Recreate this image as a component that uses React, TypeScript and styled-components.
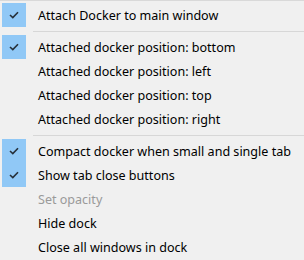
import styled, { createGlobalStyle } from "styled-components";

const Global = createGlobalStyle`
  html, body {
    margin: 0;
    padding: 0;
    background: #f0f0f0;
  }
`;

const Menu = styled.div`
  width: 304px;
  height: 260px;
  box-sizing: border-box;
  background: #f0f0f0;
  border-top: 1px solid #d9d9d9;
  padding-top: 2px;
  font-family: "Noto Sans", "Open Sans", sans-serif;
  font-size: 12.55px;
  color: #000;
  overflow: hidden;
`;

const Row = styled.div<{ $disabled?: boolean }>`
  display: flex;
  align-items: center;
  height: 24px;
  color: ${(p) => (p.$disabled ? "#9a9a9a" : "#000")};
`;

const CheckCell = styled.div<{ $checked?: boolean }>`
  width: 24px;
  height: 24px;
  margin-left: 2px;
  display: flex;
  align-items: center;
  justify-content: center;
  background: ${(p) => (p.$checked ? "#90c8f6" : "transparent")};
`;

const Label = styled.span`
  margin-left: 12px;
  white-space: nowrap;
`;

const Separator = styled.div`
  height: 8px;
  display: flex;
  align-items: center;
  padding-left: 33px;

  &::after {
    content: "";
    flex: 1;
    height: 1px;
    background: #d7d7d7;
  }
`;

const Check = () => (
  <svg width="10" height="8" viewBox="0 0 10 8">
    <path d="M1 4 L3.8 6.6 L9 1.2" fill="none" stroke="#26303a" strokeWidth="1.6" />
  </svg>
);

type Item = { label: string; checked?: boolean; disabled?: boolean };

const groups: Item[][] = [
  [{ label: "Attach Docker to main window", checked: true }],
  [
    { label: "Attached docker position: bottom", checked: true },
    { label: "Attached docker position: left" },
    { label: "Attached docker position: top" },
    { label: "Attached docker position: right" },
  ],
  [
    { label: "Compact docker when small and single tab", checked: true },
    { label: "Show tab close buttons", checked: true },
    { label: "Set opacity", disabled: true },
    { label: "Hide dock" },
    { label: "Close all windows in dock" },
  ],
];

export default function App() {
  return (
    <>
      <Global />
      <Menu>
        {groups.map((items, gi) => (
          <div key={gi}>
            {gi > 0 && <Separator />}
            {items.map((it) => (
              <Row key={it.label} $disabled={it.disabled}>
                <CheckCell $checked={it.checked}>{it.checked && <Check />}</CheckCell>
                <Label>{it.label}</Label>
              </Row>
            ))}
          </div>
        ))}
      </Menu>
    </>
  );
}
